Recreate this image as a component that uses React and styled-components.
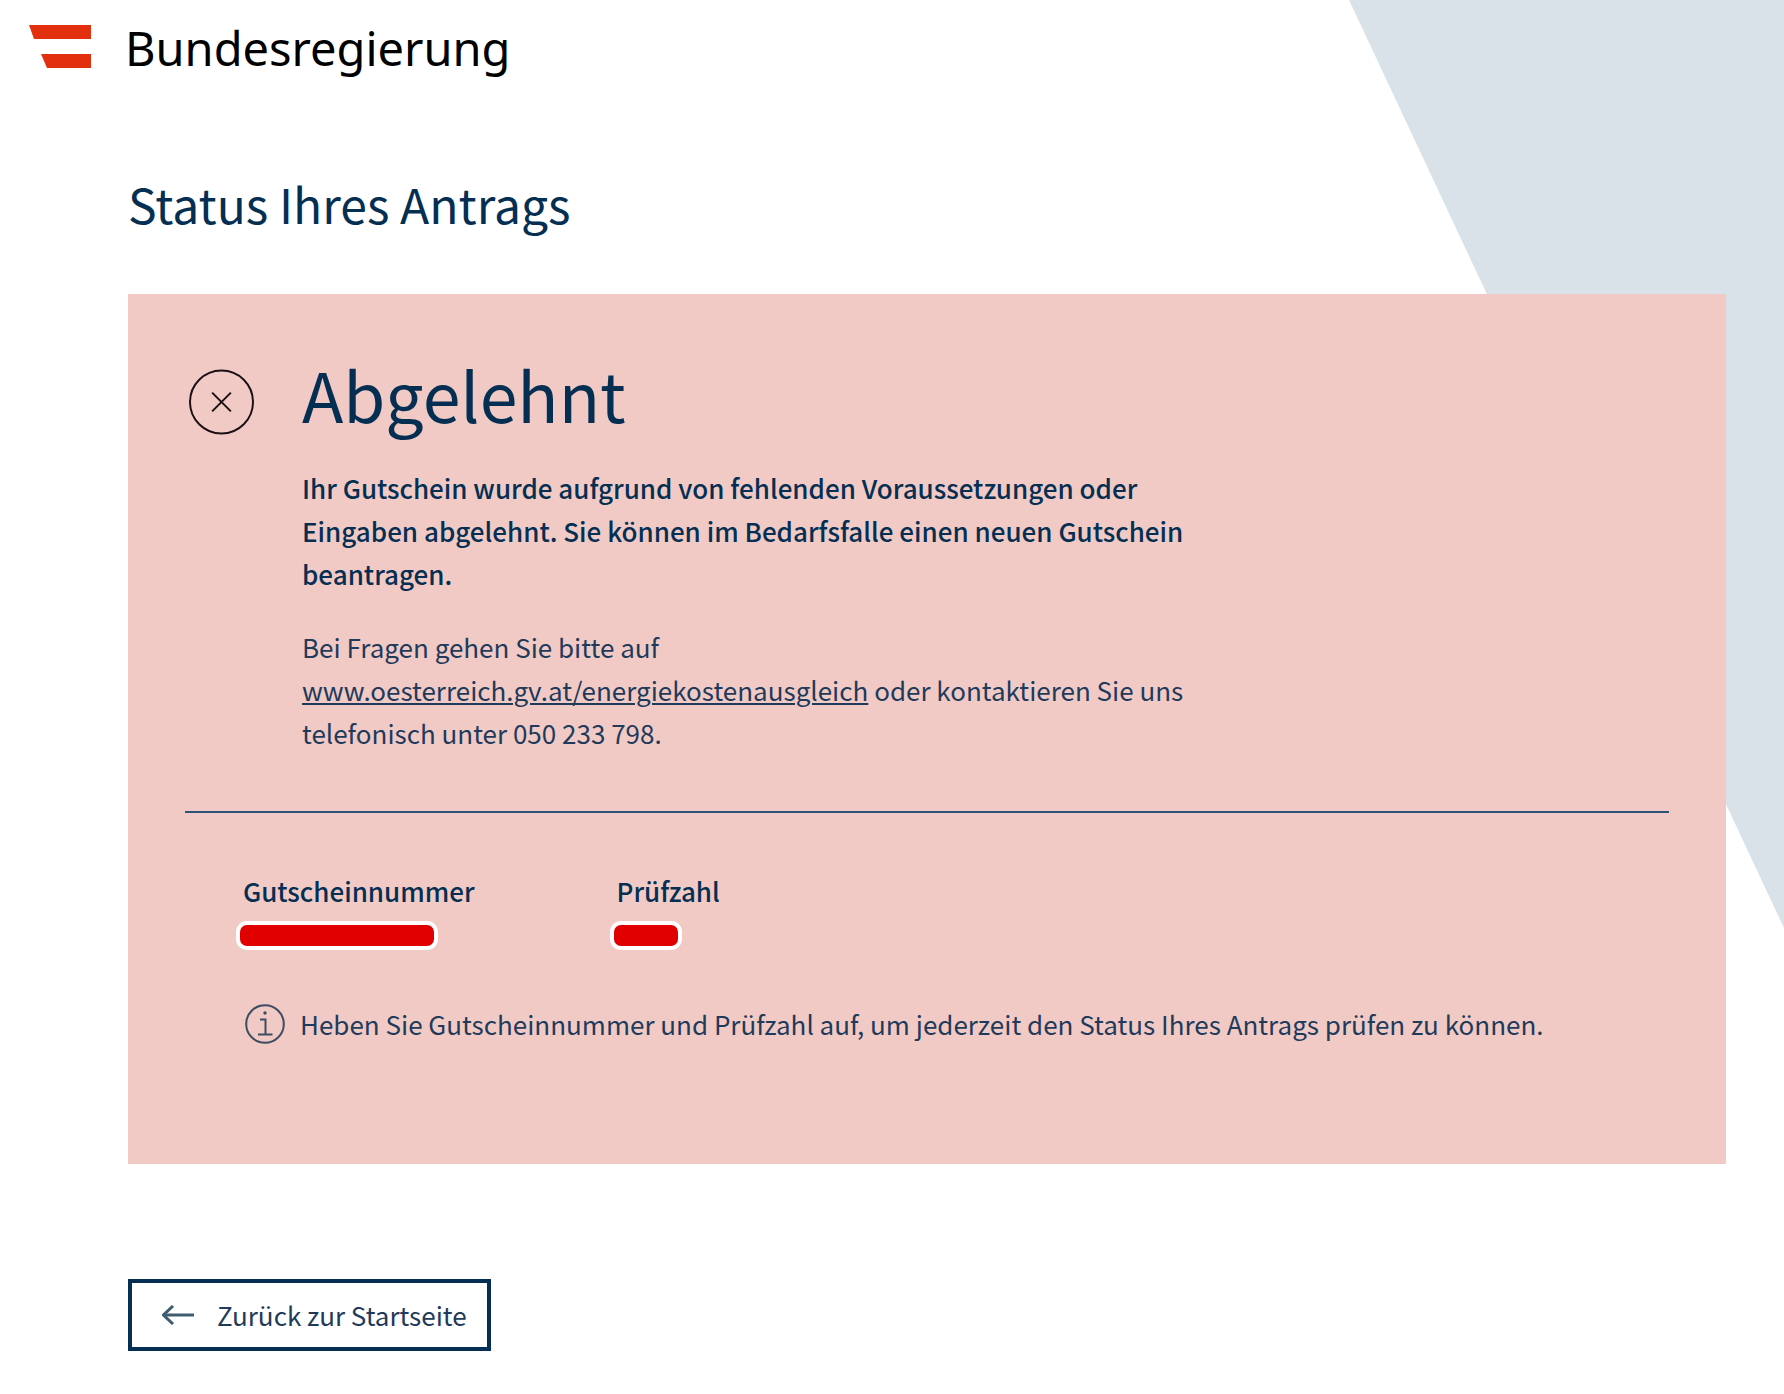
import * as React from "react";
import styled, { createGlobalStyle } from "styled-components";

const details = [
  { label: "Gutscheinnummer", barWidth: 202 },
  { label: "Prüfzahl", barWidth: 72 },
];

function App() {
  return (
    <Page>
      <GlobalStyle />
      <Wedge />
      <Header>
        <HomeLink href="/">
          <LogoMark viewBox="0 0 62 43" aria-hidden="true">
            <path d="M0 0h62v14H5z" />
            <path d="M12 29h50v14H18z" />
          </LogoMark>
          Bundesregierung
        </HomeLink>
      </Header>
      <Main>
        <PageTitle>Status Ihres Antrags</PageTitle>
        <Panel>
          <StatusRow>
            <StatusIcon viewBox="0 0 66 66" aria-hidden="true">
              <circle cx="33" cy="33" r="32" />
              <path d="M23.5 23.5l19 19M42.5 23.5l-19 19" />
            </StatusIcon>
            <StatusBody>
              <StatusTitle>Abgelehnt</StatusTitle>
              <Text $strong>
                Ihr Gutschein wurde aufgrund von fehlenden Voraussetzungen oder
                Eingaben abgelehnt. Sie können im Bedarfsfalle einen neuen
                Gutschein beantragen.
              </Text>
              <Text>
                Bei Fragen gehen Sie bitte auf{" "}
                <TextLink href="#energiekostenausgleich">
                  www.oesterreich.gv.at/energiekostenausgleich
                </TextLink>{" "}
                oder kontaktieren Sie uns telefonisch unter 050 233 798.
              </Text>
            </StatusBody>
          </StatusRow>
          <Divider />
          <DetailList>
            {details.map((item) => (
              <div key={item.label}>
                <DetailLabel>{item.label}</DetailLabel>
                <DetailValue>
                  <HiddenValue $width={item.barWidth} />
                </DetailValue>
              </div>
            ))}
          </DetailList>
          <Hint>
            <HintIcon viewBox="0 0 40 40" aria-hidden="true">
              <circle cx="20" cy="20" r="18.800" />
              <path d="M15 15.500H20.500v15M13 30.500h14.500" />
              <circle className="dot" cx="20" cy="9" r="1.700" />
            </HintIcon>
            <Text>
              Heben Sie Gutscheinnummer und Prüfzahl auf, um jederzeit den
              Status Ihres Antrags prüfen zu können.
            </Text>
          </Hint>
        </Panel>
        <BackButton type="button">
          <ArrowIcon viewBox="0 0 32 20" aria-hidden="true">
            <path d="M1 10h31" />
            <path d="M11 1l-9.500 9 9.500 9" />
          </ArrowIcon>
          Zurück zur Startseite
        </BackButton>
      </Main>
    </Page>
  );
}

const GlobalStyle = createGlobalStyle`
  * {
    box-sizing: border-box;
  }

  body {
    margin: 0;
    background: #fff;
    color: #052f52;
    font-family: "Noto Sans CJK SC", "Open Sans", sans-serif;
    font-size: 26px;
    line-height: 43px;
  }
`;

const Page = styled.div`
  position: relative;
  min-height: 100vh;
  overflow: hidden;
`;

const Wedge = styled.div`
  position: absolute;
  top: 0;
  right: 0;
  width: 435px;
  height: 928px;
  background: #d9e2e8;
  clip-path: polygon(0 0, 100% 0, 100% 100%);
`;

const Header = styled.header`
  position: relative;
  padding: 18px 29px 14px;
`;

const HomeLink = styled.a`
  display: flex;
  align-items: center;
  gap: 34px;
  width: fit-content;
  color: #000;
  font-family: "Noto Sans", sans-serif;
  font-size: 47px;
  line-height: 60px;
  text-decoration: none;
`;

const LogoMark = styled.svg`
  width: 62px;
  height: 43px;
  margin-bottom: 4px;
  fill: #e2300f;
`;

const Main = styled.main`
  position: relative;
  padding: 81px 58px 43px 128px;
`;

const PageTitle = styled.h1`
  margin: 0 0 61px;
  font-size: 48px;
  font-weight: 400;
  line-height: 60px;
`;

const Panel = styled.section`
  padding: 58px 57px 119px;
  background: #f1cac5;
`;

const StatusRow = styled.div`
  display: flex;
  align-items: flex-start;
  gap: 48px;
  padding-left: 4px;
`;

const StatusIcon = styled.svg`
  flex: none;
  width: 65px;
  height: 66px;
  margin-top: 17px;
  fill: none;
  stroke: #1a1014;
  stroke-width: 2;
`;

const StatusBody = styled.div`
  display: flex;
  flex-direction: column;
  gap: 30px;
  max-width: 900px;
`;

const StatusTitle = styled.h2`
  margin: 0;
  font-size: 68px;
  font-weight: 400;
  line-height: 84px;
`;

const Text = styled.p`
  margin: 0;
  color: ${(props) => (props.$strong ? "inherit" : "#1f3a5a")};
  font-weight: ${(props) => (props.$strong ? 500 : 400)};
`;

const TextLink = styled.a`
  color: inherit;
  text-decoration-thickness: 2px;
  text-underline-offset: 2px;
`;

const Divider = styled.hr`
  height: 2px;
  margin: 57px 0 56px;
  border: 0;
  background: #2f5278;
`;

const DetailList = styled.dl`
  display: flex;
  gap: 142px;
  margin: 0;
  padding-left: 58px;
`;

const DetailLabel = styled.dt`
  font-weight: 500;
`;

const DetailValue = styled.dd`
  display: flex;
  margin: 9px 0 0 -7px;
`;

const HiddenValue = styled.span`
  width: ${(props) => props.$width}px;
  height: 29px;
  border: 4px solid #fff;
  border-radius: 11px;
  background: #e00000;
`;

const Hint = styled.div`
  display: flex;
  align-items: center;
  gap: 15px;
  margin-top: 52px;
  padding-left: 60px;
`;

const HintIcon = styled.svg`
  flex: none;
  width: 40px;
  height: 40px;
  fill: none;
  stroke: #3f4b63;
  stroke-width: 2;

  .dot {
    fill: #3f4b63;
    stroke: none;
  }
`;

const BackButton = styled.button`
  display: inline-flex;
  align-items: center;
  gap: 23px;
  margin-top: 115px;
  padding: 10px 20px 10px 30px;
  border: 4px solid #052f52;
  background: #fff;
  color: #1f3a5a;
  font: inherit;
  line-height: 44px;
  cursor: pointer;
`;

const ArrowIcon = styled.svg`
  width: 32px;
  height: 20px;
  fill: none;
  stroke: #3f5c70;
  stroke-width: 3;
`;

export default App;
